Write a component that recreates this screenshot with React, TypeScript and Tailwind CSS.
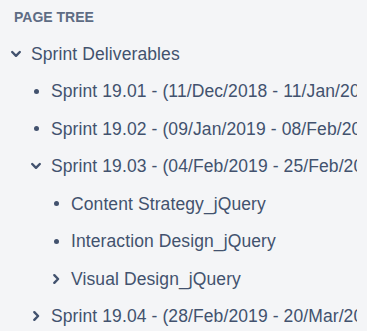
import React from 'react';

type Node = {
  title: string;
  level: number;
  kind: 'open' | 'closed' | 'leaf';
};

const nodes: Node[] = [
  { title: 'Sprint Deliverables', level: 0, kind: 'open' },
  { title: 'Sprint 19.01 - (11/Dec/2018 - 11/Jan/2019)', level: 1, kind: 'leaf' },
  { title: 'Sprint 19.02 - (09/Jan/2019 - 08/Feb/2019)', level: 1, kind: 'leaf' },
  { title: 'Sprint 19.03 - (04/Feb/2019 - 25/Feb/2019)', level: 1, kind: 'open' },
  { title: 'Content Strategy_jQuery', level: 2, kind: 'leaf' },
  { title: 'Interaction Design_jQuery', level: 2, kind: 'leaf' },
  { title: 'Visual Design_jQuery', level: 2, kind: 'closed' },
  { title: 'Sprint 19.04 - (28/Feb/2019 - 20/Mar/2019)', level: 1, kind: 'closed' },
];

const indent = ['pl-[6px]', 'pl-[26px]', 'pl-[46px]'];

function TreeIcon({ kind }: { kind: Node['kind'] }) {
  if (kind === 'leaf') {
    return <span className="block w-[5px] h-[5px] rounded-full bg-[#42526e]" />;
  }
  if (kind === 'open') {
    return (
      <svg width="12" height="12" viewBox="0 0 12 12" fill="none">
        <polyline points="2.2,4 6,7.8 9.8,4" stroke="#42526e" strokeWidth="2.4" strokeLinecap="round" strokeLinejoin="round" />
      </svg>
    );
  }
  return (
    <svg width="12" height="12" viewBox="0 0 12 12" fill="none">
      <polyline points="4.3,2.2 8.1,6 4.3,9.8" stroke="#42526e" strokeWidth="2.4" strokeLinecap="round" strokeLinejoin="round" />
    </svg>
  );
}

export default function App() {
  return (
    <div className="w-[367px] h-[331px] bg-[#f4f5f7] overflow-hidden font-['Liberation_Sans',Arial,sans-serif]">
      <div className="w-[357px] overflow-hidden">
        <div className="h-[35px] flex items-center pl-[14px] text-[14px] font-bold text-[#5e6c84]">
          PAGE TREE
        </div>
        <ul>
          {nodes.map((n, i) => (
            <li key={i} className={`h-[37.5px] flex items-center whitespace-nowrap ${indent[n.level]}`}>
              <span className="w-5 h-5 shrink-0 flex items-center justify-center">
                <TreeIcon kind={n.kind} />
              </span>
              <span className="ml-[5px] text-[17.5px] tracking-[0.1px] text-[#42526e]">{n.title}</span>
            </li>
          ))}
        </ul>
      </div>
    </div>
  );
}
